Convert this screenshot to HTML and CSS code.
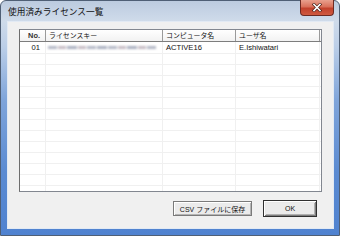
FILE: index.html
```html
<!DOCTYPE html>
<html lang="ja">
<head>
<meta charset="utf-8">
<title>使用済みライセンス一覧</title>
<link rel="stylesheet" href="styles.css">
</head>
<body>
<div class="window">
  <div class="titlebar">
    <span class="title">使用済みライセンス一覧</span>
    <div class="close">
      <svg width="12" height="9" viewBox="0 0 12 9">
        <path d="M3 1.5 L9 7.5 M9 1.5 L3 7.5" stroke="#4a2018" stroke-width="3" stroke-linecap="square"/>
        <path d="M3 1.5 L9 7.5 M9 1.5 L3 7.5" stroke="#ffffff" stroke-width="1.6" stroke-linecap="square"/>
      </svg>
    </div>
  </div>
  <div class="client">
    <div class="list">
      <div class="row header">
        <div class="cell num">No.</div>
        <div class="cell">ライセンスキー</div>
        <div class="cell">コンピュータ名</div>
        <div class="cell">ユーザ名</div>
        <div class="cell rest"></div>
      </div>
      <div class="body">
        <div class="row">
          <div class="cell num">01</div>
          <div class="cell"><div class="redacted"><i></i><i></i><i></i><i></i><i></i><i></i><i></i><i></i><i></i><i></i><i></i></div></div>
          <div class="cell">ACTIVE16</div>
          <div class="cell">E.Ishiwatari</div>
          <div class="cell rest"></div>
        </div>
        <div class="row"><div class="cell num"></div><div class="cell"></div><div class="cell"></div><div class="cell"></div><div class="cell rest"></div></div>
        <div class="row"><div class="cell num"></div><div class="cell"></div><div class="cell"></div><div class="cell"></div><div class="cell rest"></div></div>
        <div class="row"><div class="cell num"></div><div class="cell"></div><div class="cell"></div><div class="cell"></div><div class="cell rest"></div></div>
        <div class="row"><div class="cell num"></div><div class="cell"></div><div class="cell"></div><div class="cell"></div><div class="cell rest"></div></div>
        <div class="row"><div class="cell num"></div><div class="cell"></div><div class="cell"></div><div class="cell"></div><div class="cell rest"></div></div>
        <div class="row"><div class="cell num"></div><div class="cell"></div><div class="cell"></div><div class="cell"></div><div class="cell rest"></div></div>
        <div class="row"><div class="cell num"></div><div class="cell"></div><div class="cell"></div><div class="cell"></div><div class="cell rest"></div></div>
        <div class="row"><div class="cell num"></div><div class="cell"></div><div class="cell"></div><div class="cell"></div><div class="cell rest"></div></div>
        <div class="row"><div class="cell num"></div><div class="cell"></div><div class="cell"></div><div class="cell"></div><div class="cell rest"></div></div>
        <div class="row"><div class="cell num"></div><div class="cell"></div><div class="cell"></div><div class="cell"></div><div class="cell rest"></div></div>
        <div class="row"><div class="cell num"></div><div class="cell"></div><div class="cell"></div><div class="cell"></div><div class="cell rest"></div></div>
        <div class="row"><div class="cell num"></div><div class="cell"></div><div class="cell"></div><div class="cell"></div><div class="cell rest"></div></div>
        <div class="row"><div class="cell num"></div><div class="cell"></div><div class="cell"></div><div class="cell"></div><div class="cell rest"></div></div>
      </div>
    </div>
    <div class="buttons">
      <button class="btn csv">CSV ファイルに保存</button>
      <button class="btn ok">OK</button>
    </div>
  </div>
</div>
</body>
</html>
```
FILE: styles.css
```css
* { box-sizing: border-box; }
html, body { margin: 0; padding: 0; }
body {
  width: 340px;
  height: 236px;
  overflow: hidden;
  background: #ffffff;
  font-family: "Liberation Sans", "Noto Sans CJK JP", sans-serif;
}
.window {
  width: 340px;
  height: 236px;
  border: 1px solid #4f5f75;
  border-radius: 6px 6px 0 0;
  background: linear-gradient(to bottom, #bccbdf 0px, #cfdbea 20px, #bccfe8 45px, #7ea4da 100px, #5b8bd2 170px, #4f82d0 236px);
  padding: 0 5px 6px 6px;
  display: flex;
  flex-direction: column;
}
.titlebar {
  height: 21px;
  display: flex;
  align-items: flex-start;
}
.title {
  font-family: "Noto Sans CJK JP", sans-serif;
  font-size: 8.7px;
  line-height: 9px;
  color: #111;
  margin-top: 6px;
  padding-left: 1px;
}
.close {
  margin-left: auto;
  width: 34px;
  height: 16px;
  margin-top: -1px;
  border: 1px solid #6d2a22;
  border-top: none;
  border-radius: 0 0 4px 4px;
  background: linear-gradient(to bottom, #e9a08e 0%, #d9705a 45%, #c2412c 55%, #cf5a40 100%);
  display: flex;
  align-items: center;
  justify-content: center;
}
.close svg { display: block; }
.client {
  flex: 1;
  background: #f0f0f0;
  border: 1px solid #e2eaf4;
  padding: 7px 11px 11px 11px;
  display: flex;
  flex-direction: column;
}
.list {
  height: 163px;
  border: 1px solid #828790;
  border-left-color: #6e6e6e;
  background: #ffffff;
  display: flex;
  flex-direction: column;
  overflow: hidden;
}
.row {
  display: grid;
  grid-template-columns: 26px 117px 73px 84px 1fr;
  height: 11px;
  border-bottom: 1px solid #f0f0f0;
}
.cell {
  border-right: 1px solid #f0f0f0;
  font-size: 7.6px;
  line-height: 10px;
  color: #111;
  padding-left: 3px;
  white-space: nowrap;
  overflow: hidden;
}
.cell.rest { border-right: none; }
.cell.num { text-align: right; padding-right: 5px; padding-left: 0; }
.header {
  height: 12px;
  border-bottom: 1px solid #7d7d7d;
  background: linear-gradient(to bottom, #ffffff, #f2f2f2);
}
.header .cell {
  border-right: 1px solid #9a9a9a;
  font-family: "Noto Sans CJK JP", sans-serif;
  font-size: 6.9px;
  line-height: 11px;
}
.header .cell.num {
  font-family: "Liberation Sans", sans-serif;
  font-size: 7.4px;
  font-weight: bold;
  color: #333;
}
.header .cell.rest { border-right: none; }
.body .row:first-child { height: 12px; }
.body .row:first-child .cell { line-height: 11px; }
.redacted {
  display: flex;
  gap: 1px;
  margin-top: 4px;
  margin-left: -1px;
  filter: blur(0.9px);
}
.redacted i {
  display: block;
  height: 3px;
  width: 9px;
  background: #b4b8c6;
}
.redacted i:nth-child(2n) { background: #c6bcc4; width: 8px; }
.redacted i:nth-child(3n) { background: #aab0c0; width: 10px; }
.buttons {
  display: flex;
  justify-content: flex-end;
  align-items: center;
  gap: 11px;
  margin-top: 8px;
  padding-right: 5px;
}
.btn {
  font-family: "Liberation Sans", "Noto Sans CJK JP", sans-serif;
  font-size: 7px;
  color: #111;
  padding: 0;
  margin: 0;
  background: #ebebeb;
  border: 1px solid #7a7a7a;
  box-shadow: inset 1px 1px 0 #ffffff, inset -1px -1px 0 #b4b4b4;
  border-radius: 0;
}
.csv { width: 79px; height: 15px; }
.ok {
  width: 54px;
  height: 17px;
  border: 1px solid #303030;
  box-shadow: inset 1px 1px 0 #ffffff, inset -1px -1px 0 #7d7d7d, inset 2px 2px 0 #e8e8e8, inset -2px -2px 0 #b0b0b0;
}
```
